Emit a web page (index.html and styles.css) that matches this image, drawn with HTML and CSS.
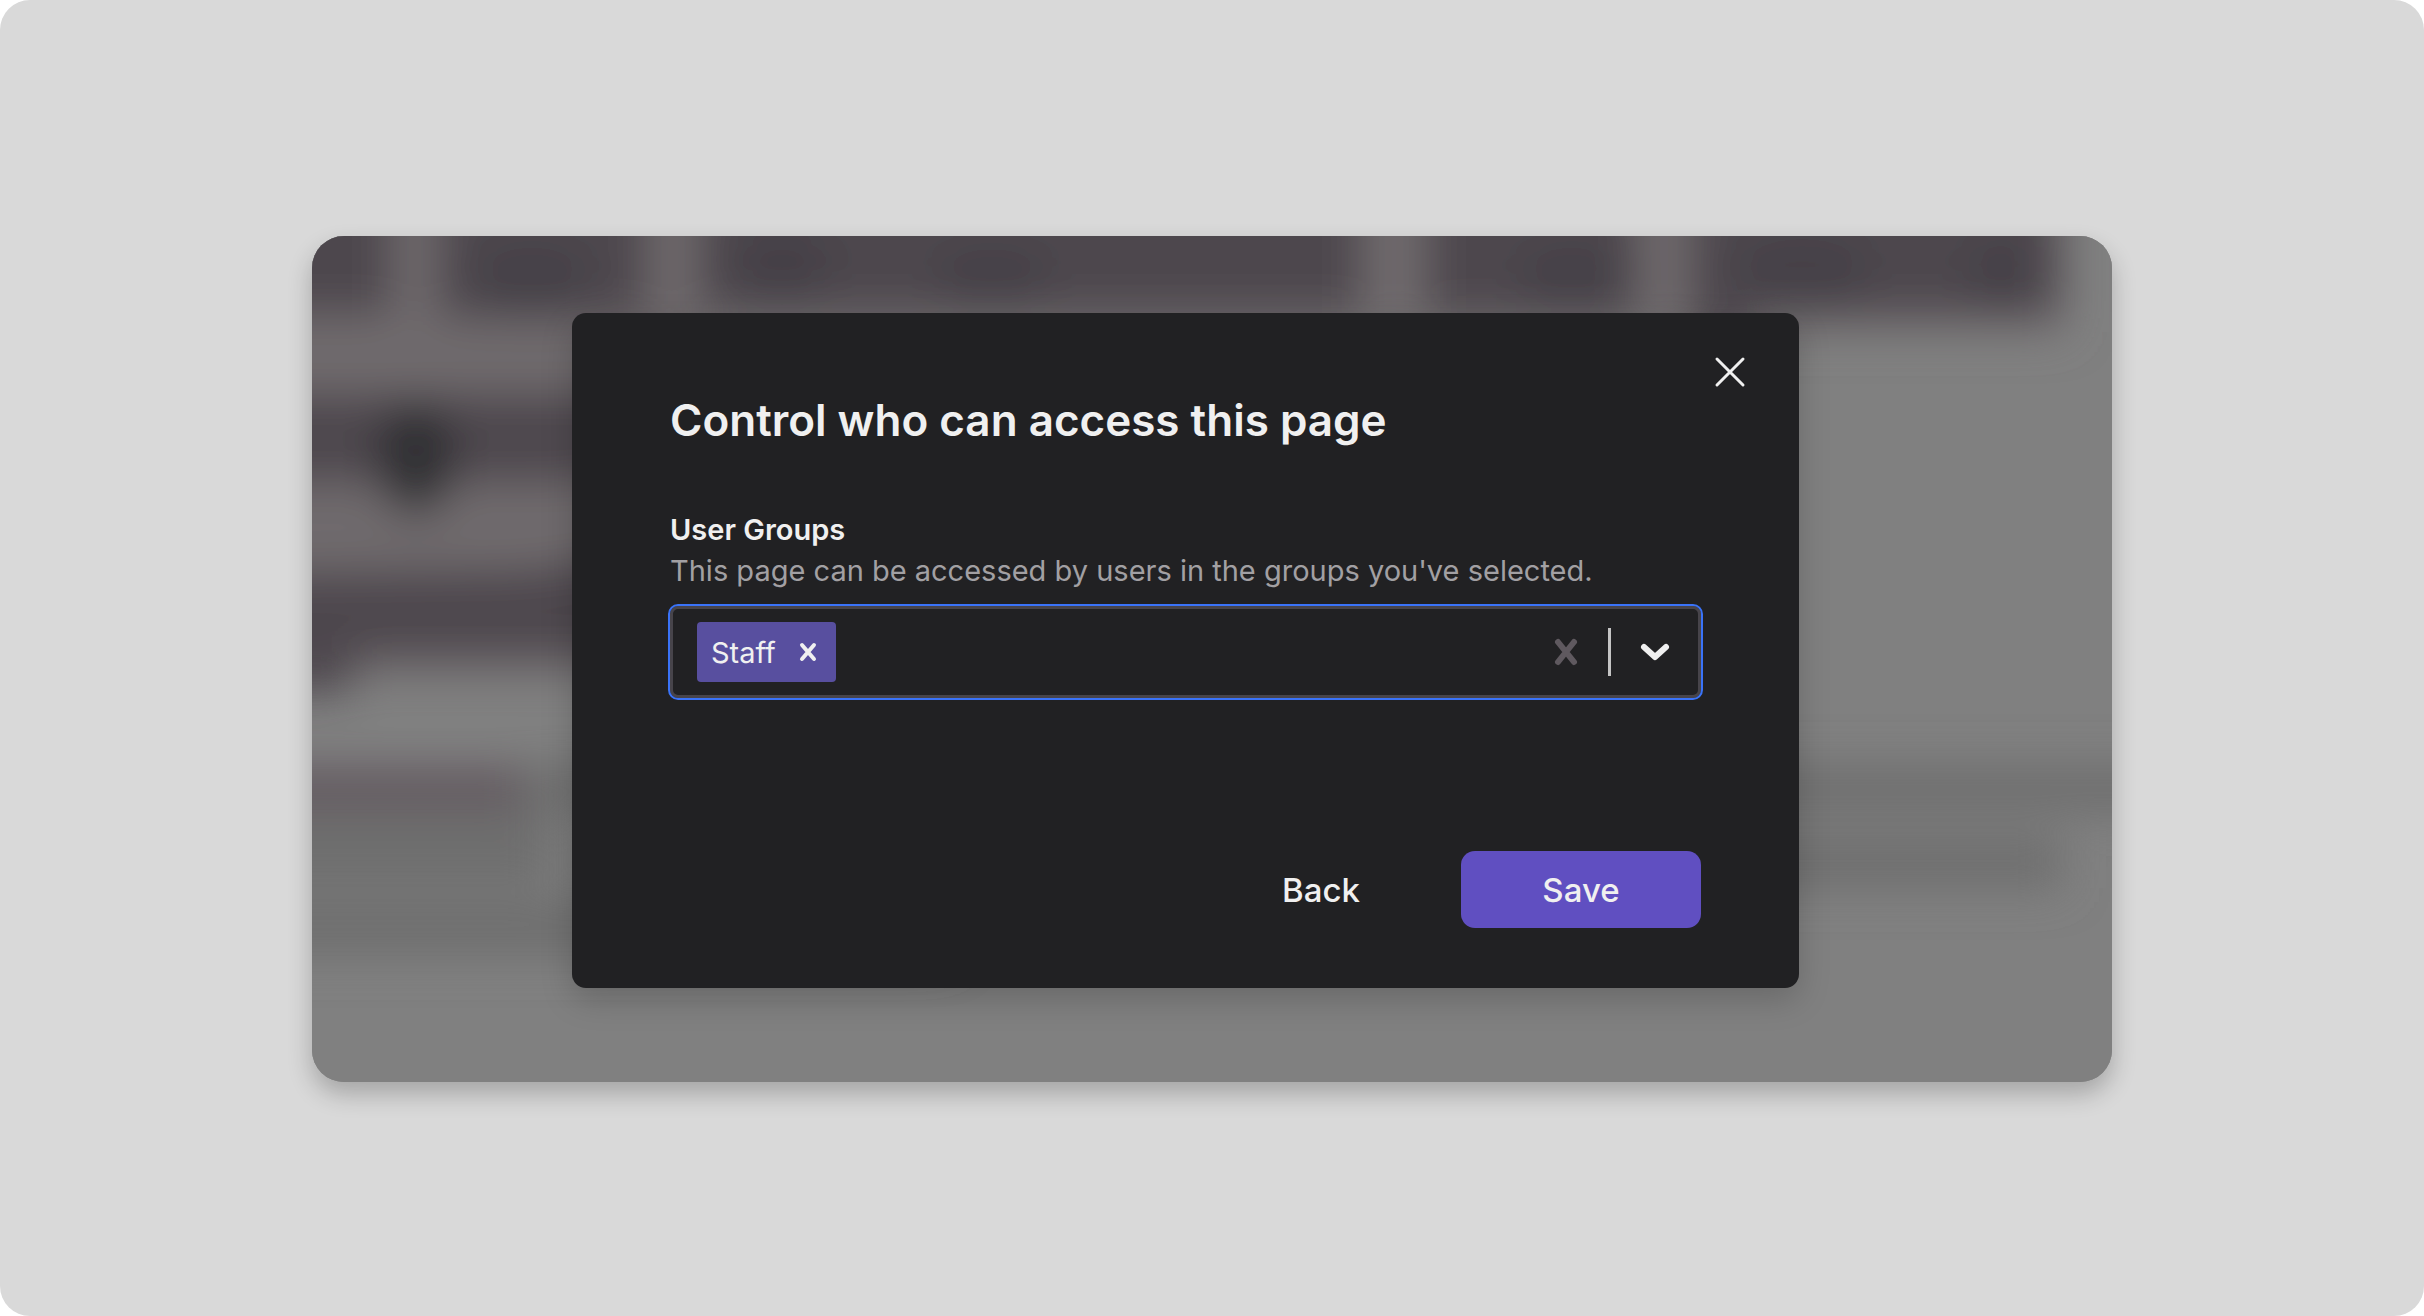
FILE: index.html
```html
<!DOCTYPE html>
<html lang="en">
<head>
<meta charset="utf-8">
<title>Page access</title>
<link rel="stylesheet" href="styles.css">
</head>
<body>
<main class="stage">
  <section class="card">
    <svg class="backdrop" viewBox="0 0 1800 846" preserveAspectRatio="none" aria-hidden="true">
      <defs>
        <filter id="soft" x="-10%" y="-20%" width="120%" height="140%"><feGaussianBlur stdDeviation="22"/></filter>
      </defs>
      <rect width="1800" height="846" fill="#808080"/>
      <g filter="url(#soft)">
        <g fill="#706a6d">
          <rect x="-80" y="-60" width="470" height="500"/>
          <rect x="380" y="-60" width="1374" height="156"/>
        </g>
        <g fill="#4d474d">
          <rect x="-80" y="-60" width="160" height="138"/>
          <rect x="126" y="-60" width="210" height="142"/>
          <rect x="386" y="-60" width="664" height="138"/>
          <rect x="1114" y="-60" width="212" height="142"/>
          <rect x="1378" y="-60" width="368" height="138"/>
          <rect x="1382" y="50" width="56" height="60"/>
          <path d="M-80 158H380V230L250 246H-80Z"/>
          <path d="M-80 338 210 334 380 312V420H-80Z"/>
          <rect x="-40" y="400" width="80" height="56"/>
        </g>
        <g fill="#454147">
          <ellipse cx="220" cy="46" rx="60" ry="36"/>
          <ellipse cx="470" cy="30" rx="50" ry="40"/>
          <ellipse cx="680" cy="44" rx="60" ry="32"/>
          <ellipse cx="1260" cy="44" rx="56" ry="34"/>
          <ellipse cx="1490" cy="38" rx="70" ry="36"/>
          <ellipse cx="1690" cy="40" rx="40" ry="34"/>
        </g>
        <ellipse cx="104" cy="222" rx="38" ry="56" fill="#2e2e30"/>
        <rect x="-60" y="532" width="280" height="42" fill="#62585e"/>
        <g fill="#6e6e6e">
          <rect x="210" y="530" width="1700" height="46"/>
          <rect x="-60" y="576" width="300" height="74"/>
          <rect x="280" y="600" width="1470" height="52"/>
          <rect x="-60" y="664" width="700" height="56"/>
        </g>
      </g>
    </svg>

    <form class="dialog" role="dialog" aria-labelledby="dialog-title">
      <button class="close" type="button" aria-label="Close">
        <svg viewBox="0 0 32 32"><path d="M3 3 29 29M29 3 3 29"/></svg>
      </button>
      <h1 class="title" id="dialog-title">Control who can access this page</h1>
      <label class="label" for="groups">User Groups</label>
      <p class="hint" id="groups-hint">This page can be accessed by users in the groups you've selected.</p>
      <div class="field">
        <span class="chip">Staff
          <button class="chip-remove" type="button" aria-label="Remove Staff">
            <svg viewBox="0 0 20 20"><path d="M4 3 16 17M16 3 4 17"/></svg>
          </button>
        </span>
        <input class="field-input" id="groups" type="text" role="combobox" aria-expanded="false" aria-describedby="groups-hint" autocomplete="off">
        <button class="clear" type="button" aria-label="Clear all">
          <svg viewBox="0 0 28 28"><path d="M6 4 22 24M22 4 6 24"/></svg>
        </button>
        <span class="divider"></span>
        <button class="toggle" type="button" aria-label="Show groups">
          <svg viewBox="0 0 32 24"><path d="M5 7 16 17 27 7"/></svg>
        </button>
      </div>
      <div class="actions">
        <button class="button" type="button">Back</button>
        <button class="button button-primary" type="submit">Save</button>
      </div>
    </form>
  </section>
</main>
</body>
</html>
```
FILE: styles.css
```css
* {
  box-sizing: border-box;
}

body {
  margin: 0;
  background: #fff;
  color: #f0f0f0;
  font-family: Inter, "Liberation Sans", sans-serif;
  font-size: 29px;
}

button,
input {
  padding: 0;
  border: 0;
  background: none;
  color: inherit;
  font: inherit;
}

button {
  cursor: pointer;
}

svg {
  display: block;
  fill: none;
  stroke: currentColor;
  stroke-linecap: round;
  stroke-linejoin: round;
}

.stage {
  min-height: 100vh;
  padding: 236px 312px 234px;
  border-radius: 30px;
  background: #d9d9d9;
}

.card {
  position: relative;
  padding: 77px 313px 94px 260px;
  border-radius: 32px;
  background: #808080;
  box-shadow: 0 12px 24px rgba(0, 0, 0, 0.24);
}

.backdrop {
  position: absolute;
  inset: 0;
  width: 100%;
  height: 100%;
  border-radius: 32px;
  stroke: none;
}

.dialog {
  position: relative;
  display: flex;
  flex-direction: column;
  padding: 78px 98px 60px;
  border-radius: 14px;
  background: #212123;
  box-shadow: 0 12px 32px rgba(0, 0, 0, 0.18);
}

.close {
  position: absolute;
  top: 43px;
  right: 53px;
  width: 32px;
  height: 32px;
  stroke-width: 3;
}

.title {
  margin: 0 0 60px;
  font-size: 44px;
  font-weight: 600;
  line-height: 58px;
}

.label {
  font-weight: 600;
  line-height: 41px;
}

.hint {
  margin: 0 0 15px;
  color: #a2a0a3;
  line-height: 41px;
}

.field {
  display: flex;
  align-items: center;
  height: 92px;
  padding: 0 27px 0 24px;
  border: 3px solid #47444a;
  border-radius: 8px;
  outline: 2px solid #3a73f8;
}

.chip {
  display: flex;
  align-items: center;
  gap: 22px;
  height: 60px;
  padding: 0 18px 0 14px;
  border-radius: 4px;
  background: #584f9f;
}

.chip-remove {
  width: 20px;
  stroke-width: 4;
}

.field-input {
  flex: 1;
  min-width: 0;
  outline: 0;
}

.clear {
  width: 28px;
  color: #5f595f;
  stroke-width: 6;
}

.divider {
  width: 3px;
  height: 48px;
  margin: 0 28px;
  background: #c4c4c4;
}

.toggle {
  width: 32px;
  stroke-width: 6;
}

.actions {
  display: flex;
  justify-content: flex-end;
  gap: 20px;
  margin-top: 153px;
}

.button {
  width: 240px;
  height: 77px;
  border-radius: 14px;
  font-size: 33px;
  font-weight: 500;
}

.button-primary {
  background: #604fc1;
}
```
